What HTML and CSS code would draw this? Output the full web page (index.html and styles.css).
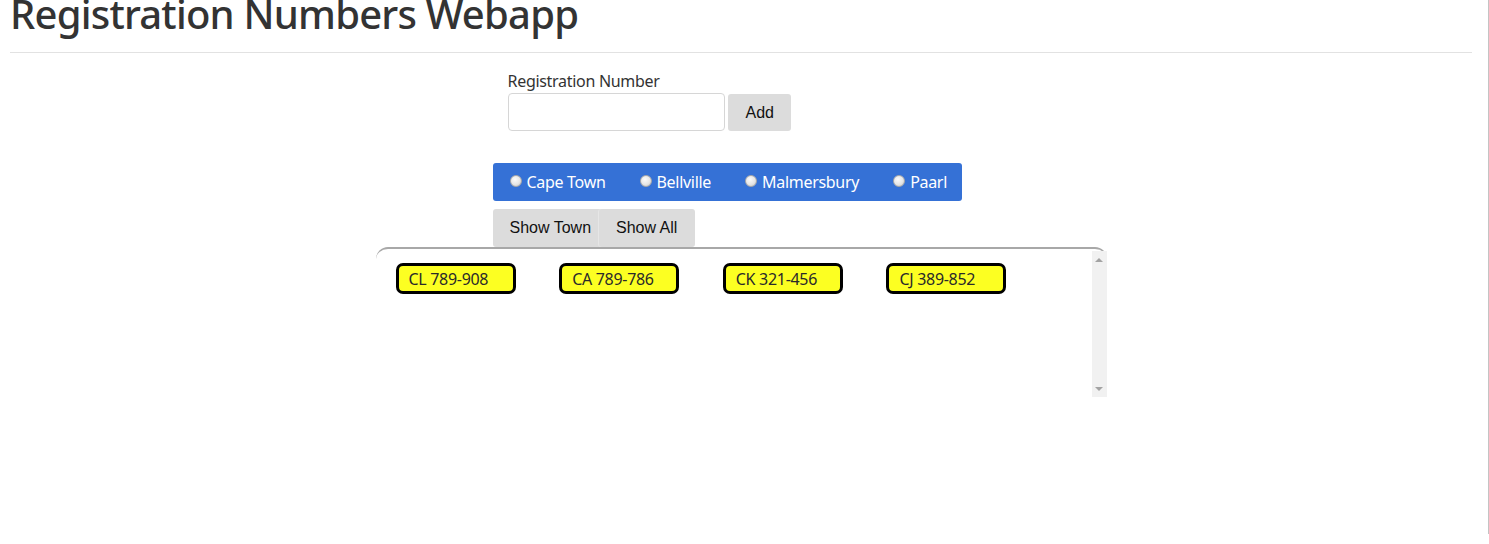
FILE: index.html
```html
<!DOCTYPE html>
<html lang="en">
<head>
<meta charset="utf-8">
<title>Registration Numbers Webapp</title>
<link rel="stylesheet" href="styles.css">
</head>
<body>
<div class="page">
  <h1 class="title">Registration Numbers Webapp</h1>
  <hr class="rule">
  <main class="app">
    <div class="controls">
      <div class="entry">
        <label class="entry-label" for="reg">Registration Number</label>
        <div class="entry-row">
          <input class="entry-input" id="reg" type="text">
          <button class="btn btn-add" type="button">Add</button>
        </div>
      </div>
      <div class="towns">
        <label class="town"><input class="radio" type="radio" name="town"><span>Cape Town</span></label>
        <label class="town"><input class="radio" type="radio" name="town"><span>Bellville</span></label>
        <label class="town"><input class="radio" type="radio" name="town"><span>Malmersbury</span></label>
        <label class="town"><input class="radio" type="radio" name="town"><span>Paarl</span></label>
      </div>
      <div class="actions">
        <button class="btn" type="button">Show Town</button>
        <button class="btn btn-overlap" type="button">Show All</button>
      </div>
    </div>
    <div class="display">
      <div class="plates">
        <div class="plate">CL 789-908</div>
        <div class="plate">CA 789-786</div>
        <div class="plate">CK 321-456</div>
        <div class="plate">CJ 389-852</div>
      </div>
      <div class="rail" aria-hidden="true">
        <span class="arrow arrow-up"></span>
        <span class="arrow arrow-down"></span>
      </div>
    </div>
  </main>
</div>
</body>
</html>
```

FILE: styles.css
```css
html, body {
  margin: 0;
  padding: 0;
  background: #fff;
}
body {
  font-family: "Noto Sans", "DejaVu Sans", sans-serif;
  color: #333;
}
.page {
  box-sizing: border-box;
  min-height: 544px;
  border-right: 1px solid #c4c4c4;
  padding: 0 16px 0 10px;
}
.title {
  margin: -10px 0 0 0;
  font-size: 40px;
  font-weight: 500;
  line-height: 48px;
  color: #333;
  letter-spacing: -0.78px;
}
.rule {
  margin: 14px 0 0 0;
  border: 0;
  border-top: 1px solid #e2e2e2;
}
.app {
  width: 731px;
  margin: 0 auto;
}
.controls {
  padding-left: 117px;
}
.entry {
  padding: 18px 0 0 15px;
}
.entry-label {
  display: block;
  font-size: 16px;
  line-height: 20px;
  letter-spacing: -0.3px;
}
.entry-row {
  display: flex;
  align-items: flex-start;
  gap: 3px;
  margin-top: 2px;
}
.entry-input {
  box-sizing: border-box;
  width: 217px;
  height: 38px;
  margin: 0;
  border: 1px solid #d6d6d6;
  border-radius: 4px;
  background: #fff;
}
.btn {
  position: relative;
  font-family: "Liberation Sans", Arial, sans-serif;
  font-size: 16px;
  line-height: 18px;
  color: #111;
  background: #dcdcdc;
  border: 0;
  border-radius: 3px;
  padding: 10px 17px;
  margin: 0;
}
.btn-add {
  margin-top: 1px;
  height: 37px;
  padding: 0 17px 0 18px;
}
.towns {
  display: inline-flex;
  align-items: center;
  gap: 34px;
  margin-top: 32px;
  height: 38px;
  padding: 0 15px 0 17px;
  background: #3571d6;
  border-radius: 3px;
}
.town {
  display: flex;
  align-items: center;
  gap: 5px;
  color: #fff;
  font-size: 16px;
  letter-spacing: -0.3px;
}
.radio {
  appearance: none;
  -webkit-appearance: none;
  width: 12px;
  height: 12px;
  margin: -3px 0 0 0;
  border-radius: 50%;
  border: 1px solid #a9a9a9;
  background: radial-gradient(circle at 40% 35%, #fbfbfb 0%, #e6e6e6 55%, #c4c4c4 100%);
  box-sizing: border-box;
}
.actions {
  display: flex;
  margin-top: 8px;
}
.actions .btn {
  height: 38px;
}
.btn-overlap {
  margin-left: -9px;
  padding-right: 18px;
  box-shadow: -1px 0 0 #e6e6e6;
}
.display {
  box-sizing: border-box;
  display: flex;
  height: 150px;
  border-top: 2px solid #a8a8a8;
  border-radius: 12px 12px 0 0;
}
.plates {
  flex: 1;
  display: flex;
  align-items: flex-start;
  gap: 43.67px;
  padding: 14px 0 0 20px;
}
.plate {
  box-sizing: border-box;
  width: 120px;
  flex: none;
  padding: 4px 10px 2px;
  font-size: 16px;
  line-height: 19px;
  color: #2a2a2a;
  background: #fcff22;
  border: 3px solid #000;
  border-radius: 7px;
  letter-spacing: -0.3px;
}
.rail {
  flex: none;
  width: 15px;
  margin-top: 2px;
  background: #f1f1f1;
  display: flex;
  flex-direction: column;
  justify-content: space-between;
  align-items: center;
  padding: 7px 0 6px;
}
.arrow {
  width: 0;
  height: 0;
  border-left: 4px solid transparent;
  border-right: 4px solid transparent;
}
.arrow-up {
  border-bottom: 4px solid #a3a3a3;
}
.arrow-down {
  border-top: 4px solid #a3a3a3;
}
```
